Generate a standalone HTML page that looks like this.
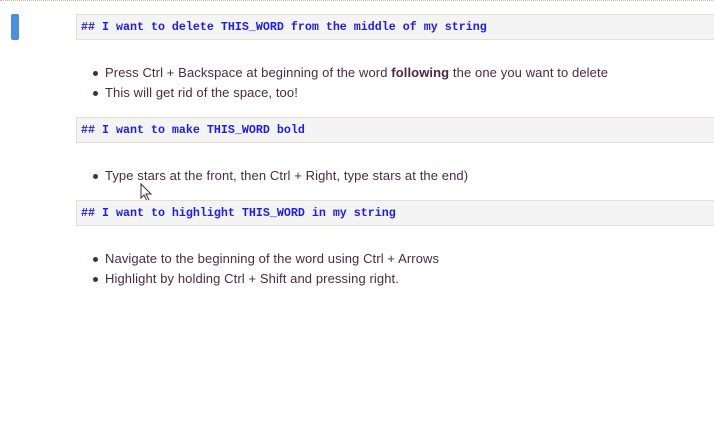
<!DOCTYPE html>
<html><head><style>
body{margin:0;width:714px;height:434px;background:#fff;position:relative;overflow:hidden;font-family:"Liberation Sans",sans-serif}
.top{position:absolute;left:0;top:0;width:714px;border-top:1px dotted #c8b89a}
.bar{position:absolute;left:11px;top:14px;width:8px;height:26px;background:#4a90e2;border-radius:2px}
.code{position:absolute;left:76px;width:640px;height:24px;background:#f4f4f4;border:1px solid #e4e0d0;border-right:none;box-sizing:content-box}
.code span{position:absolute;left:4px;top:5px;font-family:"Liberation Mono",monospace;font-weight:bold;font-size:11.67px;color:#1c1cf0;white-space:pre}
.li{position:absolute;left:105px;font-size:13px;color:#4a2a44;white-space:nowrap;letter-spacing:0.1px}
.li:before{content:"";position:absolute;left:-12px;top:6px;width:5px;height:5px;border-radius:50%;background:#4a2a44}
</style></head><body>
<div class="top"></div>
<div class="bar"></div>
<div class="code" style="top:14px"><span>## I want to delete THIS_WORD from the middle of my string</span></div>
<div class="li" style="top:65px">Press Ctrl + Backspace at beginning of the word <b>following</b> the one you want to delete</div>
<div class="li" style="top:85px">This will get rid of the space, too!</div>
<div class="code" style="top:117px"><span>## I want to make THIS_WORD bold</span></div>
<div class="li" style="top:168px">Type stars at the front, then Ctrl + Right, type stars at the end)</div>
<svg style="position:absolute;left:140px;top:183px" width="14" height="20" viewBox="0 0 14 20"><path d="M1 1 L1 15 L4 12 L7 18 L9 17 L6 11 L11 11 Z" fill="#fff" stroke="#333" stroke-width="1"/></svg>
<div class="code" style="top:200px"><span>## I want to highlight THIS_WORD in my string</span></div>
<div class="li" style="top:251px">Navigate to the beginning of the word using Ctrl + Arrows</div>
<div class="li" style="top:271px">Highlight by holding Ctrl + Shift and pressing right.</div>
</body></html>
